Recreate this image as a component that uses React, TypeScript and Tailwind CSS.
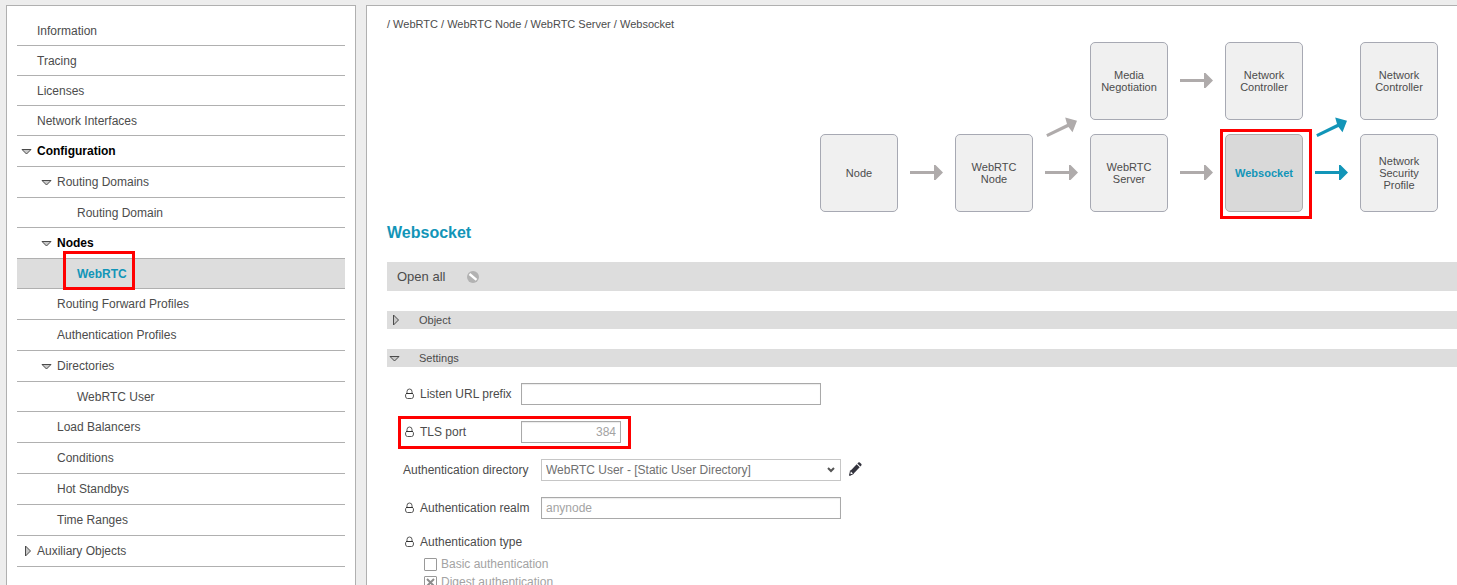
import React from 'react';

type Row = {
  label: string;
  depth: 0 | 1 | 2;
  state?: 'open' | 'closed';
  bold?: boolean;
  active?: boolean;
  top?: boolean;
};

const rows: Row[] = [
  { label: 'Information', depth: 0, top: true },
  { label: 'Tracing', depth: 0, top: true },
  { label: 'Licenses', depth: 0, top: true },
  { label: 'Network Interfaces', depth: 0, top: true },
  { label: 'Configuration', depth: 0, state: 'open', bold: true },
  { label: 'Routing Domains', depth: 1, state: 'open' },
  { label: 'Routing Domain', depth: 2 },
  { label: 'Nodes', depth: 1, state: 'open', bold: true },
  { label: 'WebRTC', depth: 2, active: true },
  { label: 'Routing Forward Profiles', depth: 1 },
  { label: 'Authentication Profiles', depth: 1 },
  { label: 'Directories', depth: 1, state: 'open' },
  { label: 'WebRTC User', depth: 2 },
  { label: 'Load Balancers', depth: 1 },
  { label: 'Conditions', depth: 1 },
  { label: 'Hot Standbys', depth: 1 },
  { label: 'Time Ranges', depth: 1 },
  { label: 'Auxiliary Objects', depth: 0, state: 'closed' },
];

function Triangle({ open }: { open: boolean }) {
  return open ? (
    <svg width="11" height="8" viewBox="0 0 11 8" className="block" aria-hidden="true">
      <path d="M1 2.500H10L5.500 7Z" fill="#c8c8c8" stroke="#4a4a4a" />
    </svg>
  ) : (
    <svg width="7" height="12" viewBox="0 0 7 12" className="block" aria-hidden="true">
      <path d="M.5 1V11L5.500 6Z" fill="#c8c8c8" stroke="#4a4a4a" />
    </svg>
  );
}

function Sidebar() {
  return (
    <nav aria-label="Main" className="w-[350px] shrink-0 border border-b-0 border-[#b0b0b0] bg-white px-2.5 pt-2.5">
      <ul>
        {rows.map((r) => (
          <li
            key={r.label}
            className={`relative flex border-b border-[#b0b0b0] ${r.top || r.depth === 2 ? 'h-[30px]' : 'h-[31px]'} ${
              r.active ? 'bg-[#dddddd]' : ''
            }`}
          >
            <a
              href="#"
              className={`flex flex-1 items-center ${r.depth === 2 ? 'pl-10' : r.depth === 1 ? 'pl-5' : ''} ${
                r.active ? 'font-bold text-[#1295b8]' : r.bold ? 'font-bold text-black' : 'text-[#4c4c4c]'
              }`}
            >
              <span className={`flex w-5 shrink-0 ${r.state === 'closed' ? 'pl-2' : 'pl-1'}`}>
                {r.state && <Triangle open={r.state === 'open'} />}
              </span>
              {r.label}
            </a>
            {r.active && (
              <span className="pointer-events-none absolute -top-2 left-[46px] h-[39px] w-[72px] border-3 border-[#ff0000]" />
            )}
          </li>
        ))}
      </ul>
    </nav>
  );
}

function Arrows({ lines, teal }: { lines: ('top' | 'up' | 'bottom')[]; teal?: boolean }) {
  return (
    <svg
      width="57"
      height="170"
      viewBox="0 0 57 170"
      aria-hidden="true"
      className={`row-span-2 ${teal ? 'text-[#1295b8]' : 'text-[#afabab]'}`}
      fill="currentColor"
    >
      {lines.includes('top') && <path d="M12 37H36V31H37.500L45 38.500L37.500 46H36V40H12Z" />}
      {lines.includes('up') && (
        <path d="M13.200 92.300L34 82L32.200 75.500L44 78.700L39.500 90.300L35.500 85L14.500 95Z" />
      )}
      {lines.includes('bottom') && <path d="M12 129H36V123H37.500L45 130.500L37.500 138H36V132H12Z" />}
    </svg>
  );
}

function Node({ lines, active, className = '' }: { lines: string[]; active?: boolean; className?: string }) {
  return (
    <div className={`relative size-[78px] ${className}`}>
      <button
        type="button"
        className={`size-full rounded-[5px] border text-[11px] leading-3 ${
          active ? 'border-[#adadad] bg-[#d9d9d9] font-bold text-[#1295b8]' : 'border-[#a7a9b3] bg-[#f0f0f0] text-[#4c4c4c]'
        }`}
      >
        {lines.map((l) => (
          <span key={l} className="block">
            {l}
          </span>
        ))}
      </button>
      {active && (
        <span className="pointer-events-none absolute -top-[5px] -left-[5px] h-[90px] w-[92px] border-3 border-[#ff0000]" />
      )}
    </div>
  );
}

function Diagram() {
  return (
    <div className="grid grid-flow-col grid-cols-[78px_57px_78px_57px_78px_57px_78px_57px_78px] grid-rows-[78px_78px] justify-end gap-y-3.5 pr-[19px]">
      <Node className="row-start-2" lines={['Node']} />
      <Arrows lines={['bottom']} />
      <Node className="row-start-2" lines={['WebRTC', 'Node']} />
      <Arrows lines={['up', 'bottom']} />
      <Node lines={['Media', 'Negotiation']} />
      <Node lines={['WebRTC', 'Server']} />
      <Arrows lines={['top', 'bottom']} />
      <Node lines={['Network', 'Controller']} />
      <Node active lines={['Websocket']} />
      <Arrows teal lines={['up', 'bottom']} />
      <Node lines={['Network', 'Controller']} />
      <Node lines={['Network', 'Security', 'Profile']} />
    </div>
  );
}

function Lock() {
  return (
    <svg width="9" height="12" viewBox="0 0 9 12" fill="none" stroke="#555" className="shrink-0" aria-hidden="true">
      <path d="M2 6V3.500Q2 1 4.500 1Q7 1 7 3.500V6" />
      <path d="M1.500 5.500H7.500Q8.500 6 8.500 8Q8.500 10.500 6.500 10.500H2.500Q.5 10.500 .5 8Q.5 6 1.500 5.500Z" />
      <path d="M1 5.500H8" stroke="#333" />
    </svg>
  );
}

function Section({ title, open }: { title: string; open: boolean }) {
  return (
    <button
      type="button"
      aria-expanded={open}
      className="mt-5 flex h-[18px] w-full items-center bg-[#dddddd] text-left text-[11px]"
    >
      <span className="flex w-8 pl-0.5">
        <span className={open ? '' : 'pl-1'}>
          <Triangle open={open} />
        </span>
      </span>
      {title}
    </button>
  );
}

const field = 'h-[22px] border border-[#a9a9a9] bg-white px-1 text-[12px] shadow-[inset_0_1px_1px_#ececec]';

function FieldLabel({ id, text, lock = true, wide }: { id: string; text: string; lock?: boolean; wide?: boolean }) {
  return (
    <label htmlFor={id} className={`flex shrink-0 items-center ${wide ? 'w-[138px]' : 'w-[118px]'}`}>
      {lock && (
        <span className="w-[17px] shrink-0 pl-0.5">
          <Lock />
        </span>
      )}
      {text}
    </label>
  );
}

function Check({ id, text, checked }: { id: string; text: string; checked?: boolean }) {
  return (
    <div className="flex h-[18px] items-center gap-1 text-[#a3a3a3]">
      <span className="relative flex">
        <input
          id={id}
          type="checkbox"
          disabled
          defaultChecked={checked}
          className="size-[13px] appearance-none rounded-[1px] border border-[#999999] bg-white"
        />
        {checked && (
          <svg
            width="13"
            height="13"
            viewBox="0 0 13 13"
            className="pointer-events-none absolute inset-0"
            stroke="#8c8c8c"
            strokeWidth="2"
            aria-hidden="true"
          >
            <path d="M3 3L10 10M10 3L3 10" />
          </svg>
        )}
      </span>
      <label htmlFor={id}>{text}</label>
    </div>
  );
}

function SettingsForm() {
  return (
    <form className="flex flex-col pt-4 pl-4">
      <div className="flex flex-col gap-4">
        <div className="flex items-center">
          <FieldLabel id="prefix" text="Listen URL prefix" />
          <input id="prefix" type="text" className={`${field} w-[300px]`} />
        </div>
        <div className="relative flex items-center">
          <FieldLabel id="port" text="TLS port" />
          <input id="port" type="text" defaultValue="384" className={`${field} w-[100px] text-right text-[#a3a3a3]`} />
          <span className="pointer-events-none absolute -top-[5px] -left-[5px] h-[33px] w-[233px] border-3 border-[#ff0000]" />
        </div>
        <div className="flex items-center">
          <FieldLabel id="directory" text="Authentication directory" lock={false} wide />
          <span className="relative flex">
            <select
              id="directory"
              className="h-[22px] w-[300px] appearance-none border border-[#c6c6c6] bg-white px-1 text-[12px] text-[#707070]"
            >
              <option>WebRTC User - [Static User Directory]</option>
            </select>
            <svg
              width="8"
              height="6"
              viewBox="0 0 8 6"
              fill="none"
              stroke="#555"
              strokeWidth="2"
              className="pointer-events-none absolute top-2 right-1.5"
              aria-hidden="true"
            >
              <path d="M1 1L4 4L7 1" />
            </svg>
          </span>
          <button type="button" aria-label="Edit directory" className="ml-2 pb-0.5">
            <svg width="13" height="14" viewBox="0 0 13 14" className="block" aria-hidden="true">
              <path
                d="M9.300 .6Q10 0 10.800 .5L12.400 2.100Q12.900 2.900 12.300 3.600L11.400 4.500L8.400 1.500Z"
                fill="#33333d"
              />
              <path d="M7.700 2.200L10.700 5.200L4.500 11.700L1.500 8.700Z" fill="#33333d" />
              <path d="M1.500 8.700L4.500 11.700L.6 13.300Z" fill="#fff" stroke="#33333d" />
              <path d="M.2 13.700L.9 11.500L2.600 13Z" fill="#33333d" />
            </svg>
          </button>
        </div>
        <div className="flex items-center">
          <FieldLabel id="realm" text="Authentication realm" wide />
          <input id="realm" type="text" placeholder="anynode" className={`${field} w-[300px] placeholder:text-[#a3a3a3]`} />
        </div>
      </div>
      <fieldset className="pt-3.5">
        <legend className="contents">
          <span className="flex h-[18px] items-center">
            <span className="w-[17px] shrink-0 pl-0.5">
              <Lock />
            </span>
            Authentication type
          </span>
        </legend>
        <div className="pt-1 pl-[21px]">
          <Check id="basic" text="Basic authentication" />
          <Check id="digest" text="Digest authentication" checked />
        </div>
      </fieldset>
    </form>
  );
}

export default function App() {
  return (
    <div className="flex h-screen gap-2.5 overflow-hidden bg-[#ededed] pt-[5px] pl-1.5 font-['Liberation_Sans',Arial,sans-serif] text-[12px] leading-4 text-[#4c4c4c]">
      <Sidebar />
      <main className="min-w-0 flex-1 overflow-hidden border-t border-l border-[#b0b0b0] bg-white pt-2.5 pl-5">
        <div className="text-[11px]">
          <a href="#">/ WebRTC</a> <a href="#">/ WebRTC Node</a> <a href="#">/ WebRTC Server</a>{' '}
          <a href="#">/ Websocket</a>
        </div>
        <div className="pt-2.5">
          <Diagram />
        </div>
        <h1 className="pt-[11px] text-[16px] leading-5 font-bold text-[#1295b8]">Websocket</h1>
        <div className="mt-[19px] flex h-[29px] items-center gap-[22px] bg-[#dddddd] pl-2.5 text-[13px]">
          <button type="button">Open all</button>
          <svg width="12" height="12" viewBox="0 0 12 12" aria-hidden="true">
            <circle cx="6" cy="6" r="6" fill="#b2b2b2" />
            <path d="M2.500 3L9.500 8.800" stroke="#fff" strokeWidth="2.400" />
          </svg>
        </div>
        <Section title="Object" open={false} />
        <Section title="Settings" open />
        <SettingsForm />
      </main>
    </div>
  );
}
